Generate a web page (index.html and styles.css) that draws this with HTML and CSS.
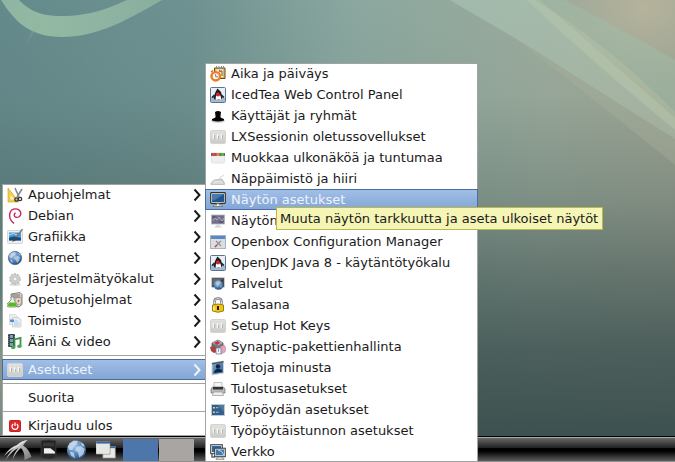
FILE: index.html
```html
<!DOCTYPE html>
<html lang="fi">
<head>
<meta charset="utf-8">
<meta name="viewport" content="width=device-width, initial-scale=1">
<title>Työpöytä</title>
<link rel="stylesheet" href="styles.css">
</head>
<body>
<svg class="defs" width="0" height="0" aria-hidden="true">
  <defs>
    <linearGradient id="plate" x1="0" y1="0" x2="0" y2="1"><stop offset="0" stop-color="#e2e2e0"/><stop offset="1" stop-color="#cbcbc8"/></linearGradient>
    <radialGradient id="sea" cx=".4" cy=".3" r=".8"><stop offset="0" stop-color="#a9c8e6"/><stop offset=".6" stop-color="#4a79ac"/><stop offset="1" stop-color="#1d3f6c"/></radialGradient>
    <linearGradient id="wing" x1="0" y1="0" x2="1" y2="1"><stop offset="0" stop-color="#f0f0f0"/><stop offset="1" stop-color="#777"/></linearGradient>
    <linearGradient id="pane" x1="0" y1="0" x2="1" y2="1"><stop offset="0" stop-color="#7fa9d8"/><stop offset="1" stop-color="#2c5f9c"/></linearGradient>
    <symbol id="i-sliders" viewBox="0 0 16 16">
      <rect x=".5" y="1.500" width="15" height="13" rx="1.500" fill="url(#plate)" stroke="#d4d4d1"/>
      <path d="M3.500 5v5M7.500 5v5M11.500 5v5" stroke="#f6f6f4" stroke-width="1.600"/>
      <path d="M4.500 6v4M8.500 7v3M12.500 6v4" stroke="#aaaaa7" stroke-width=".8"/>
    </symbol>
    <symbol id="i-duke" viewBox="0 0 16 16">
      <rect x=".5" y=".5" width="15" height="15" rx="1" fill="#e8eff5" stroke="#5c7690"/>
      <path d="M1 10q7-3 14 1v4H1z" fill="#9fbad2"/>
      <path d="M7.500 1.500L11 5l1.500 5.500-1.500 2.500H5l-1.500-2.500L5.500 5z" fill="#1c1c22"/>
      <path d="M6 8.500h4.500l1 4.500-3-.5-3 .5z" fill="#fff"/>
      <circle cx="7.900" cy="7.500" r="1.900" fill="#e0242e"/>
      <path d="M4.500 8l-2.500 2.500M11.500 8l2.500 2.500" stroke="#222" stroke-width="1.400"/>
    </symbol>
    <symbol id="i-globe" viewBox="0 0 16 16">
      <circle cx="8" cy="8" r="6.700" fill="url(#sea)" stroke="#375f8e" stroke-width=".6"/>
      <path d="M4 3l3-1 2 1-1 2-2 1-1 2-2 0-1-2zM8 7l3-1 2 1-1 4-2 2-1-3-2-1zM11 3l2 1 1 2-2-1zM3 9l2 1 1 3-2-1z" fill="#d3e3f3" opacity=".65"/>
    </symbol>
    <symbol id="i-arrow" viewBox="0 0 8 14">
      <path d="M1.500 1.500L6.500 7l-5 5.500" fill="none" stroke="currentColor" stroke-width="2"/>
    </symbol>
  </defs>
</svg>

<main class="desktop">
  <svg class="wallpaper" viewBox="0 0 675 436" preserveAspectRatio="none" aria-hidden="true">
    <defs>
      <linearGradient id="sky" x1="0" y1="0" x2="1" y2="0"><stop offset="0" stop-color="#658a8b"/><stop offset=".28" stop-color="#6e9291"/><stop offset=".52" stop-color="#8aa79f"/><stop offset=".8" stop-color="#9bab9c"/><stop offset="1" stop-color="#a0a796"/></linearGradient>
      <linearGradient id="dusk" x1="0" y1="0" x2="0" y2="1"><stop offset="0" stop-color="#3d5150" stop-opacity="0"/><stop offset=".22" stop-color="#3d5150" stop-opacity=".06"/><stop offset=".45" stop-color="#3d5150" stop-opacity=".3"/><stop offset=".62" stop-color="#3d5150" stop-opacity=".58"/><stop offset=".8" stop-color="#3d5150" stop-opacity=".84"/><stop offset="1" stop-color="#3d5150"/></linearGradient>
      <radialGradient id="warm"><stop offset="0" stop-color="#b9b49c" stop-opacity=".9"/><stop offset="1" stop-color="#a9ad98" stop-opacity="0"/></radialGradient>
      <linearGradient id="edge" x1="0" y1="0" x2="0" y2="1"><stop offset=".42" stop-color="#5e7e79"/><stop offset=".7" stop-color="#89958a"/><stop offset="1" stop-color="#758b80"/></linearGradient>
      <linearGradient id="loop" x1="0" y1="0" x2="1" y2="0"><stop offset="0" stop-color="#8fb4a2"/><stop offset=".25" stop-color="#93b9a3"/><stop offset="1" stop-color="#8aae9f"/></linearGradient>
      <linearGradient id="beam" x1="0" y1="0" x2="1" y2="1"><stop offset="0" stop-color="#a8c3b5" stop-opacity=".65"/><stop offset="1" stop-color="#b0bea9" stop-opacity=".55"/></linearGradient>
    </defs>
    <rect width="675" height="436" fill="url(#sky)"/>
    <rect width="675" height="436" fill="url(#dusk)"/>
    <rect y="184" width="3" height="252" fill="url(#edge)"/>
    <ellipse cx="645" cy="8" rx="110" ry="85" fill="url(#warm)"/>
    <path d="M1 0C15 22 30 37 62 37C96 37 124 22 162 0H127C103 11 84 16 64 16C45 16 33 14 19 0z" fill="url(#loop)"/>
    <path d="M38 21Q30 31 27 44Q33 33 43 22z" fill="#8ab09e" opacity=".25"/>
    <path d="M450 0H540L675 118V139Q600 92 530 47z" fill="url(#beam)"/>
    <path d="M530 47Q600 92 675 139V165Q610 112 515 38z" fill="#adb39c" opacity=".35"/>
    <path d="M527 0H535Q600 38 675 112V130Q590 60 527 0z" fill="#bac9ad" opacity=".45"/>
    <path d="M535 0H565Q620 28 675 60V112Q600 42 535 0z" fill="#a0bfa9" opacity=".45"/>
  </svg>

  <nav class="menu menu-main" aria-label="Päävalikko">
    <button class="item" type="button">
      <svg class="icon" viewBox="0 0 16 16"><path d="M1 1v14h11z" fill="#f2cf4b" stroke="#c9a326" stroke-width=".6"/><path d="M3.500 8v4.500h4z" fill="#fff6cf"/><path d="M8 1l4 9M15 2l-5 8" stroke="#85898a" stroke-width="1.600"/><circle cx="9.500" cy="12.500" r="1.700" fill="none" stroke="#333" stroke-width="1.300"/><circle cx="13" cy="12" r="1.700" fill="none" stroke="#333" stroke-width="1.300"/></svg>
      <span>Apuohjelmat</span><svg class="arrow"><use href="#i-arrow"/></svg>
    </button>
    <button class="item" type="button">
      <svg class="icon" viewBox="0 0 16 16"><path d="M7 15.500C4 13 2 9.500 2.800 5.500C3.500 2.500 6 .8 9 .9C12 1.100 14 3.500 13.800 6C13.500 8.500 11 9.800 9 9.300C7 8.800 6.500 6.500 8.500 4.800" fill="none" stroke="#c8265c" stroke-width="1.400"/></svg>
      <span>Debian</span><svg class="arrow"><use href="#i-arrow"/></svg>
    </button>
    <button class="item" type="button">
      <svg class="icon" viewBox="0 0 16 16"><rect x=".5" y="1.500" width="15" height="13" rx="1" fill="#eee" stroke="#d5d5d3"/><path d="M2 3.500h12v8H2z" fill="#4a9ad2"/><path d="M2 9q4-3 12 0v2.500H2z" fill="#174d80"/><path d="M2 6q5-3 8 0" stroke="#b5dff5" fill="none"/><path d="M15.500 0L9 8.500" stroke="#777" stroke-width="1.400"/><path d="M9.500 8L5 12.500q3 .5 5.500-3.500z" fill="#444"/></svg>
      <span>Grafiikka</span><svg class="arrow"><use href="#i-arrow"/></svg>
    </button>
    <button class="item" type="button">
      <svg class="icon"><use href="#i-globe"/></svg>
      <span>Internet</span><svg class="arrow"><use href="#i-arrow"/></svg>
    </button>
    <button class="item" type="button">
      <svg class="icon" viewBox="0 0 16 16"><ellipse cx="8" cy="13.500" rx="6" ry="1.500" fill="#ddd"/><circle cx="8" cy="8" r="5" fill="#d4d4d2" stroke="#b5b5b3" stroke-width="1.500" stroke-dasharray="2 1.140"/><circle cx="8" cy="8" r="4.300" fill="#cfcfcd"/><circle cx="8" cy="8" r="2" fill="#f5f5f5" stroke="#b5b5b3" stroke-width=".7"/></svg>
      <span>Järjestelmätyökalut</span><svg class="arrow"><use href="#i-arrow"/></svg>
    </button>
    <button class="item" type="button">
      <svg class="icon" viewBox="0 0 16 16"><path d="M4 2l9-1.500 2 2v10l-3 2.500-7-1z" fill="#d5d1c8" stroke="#66645e" stroke-width=".8"/><path d="M5 3h8M6 5h7" stroke="#77736a"/><rect x="9" y="6" width="5" height="6" fill="#faf8f4" stroke="#777" stroke-width=".5"/><rect x="10.500" y="7.500" width="2" height="3" fill="#d56c38"/><path d="M4 5h3v3l3 4q1 3-2 3H2q-3 0-2-3l4-4z" fill="#eef5e8" stroke="#68735f" stroke-width=".7"/><path d="M2 10.500h6.500l1 2q.5 2-1.500 2H2.500q-2 0-1.500-2z" fill="#55ba21"/></svg>
      <span>Opetusohjelmat</span><svg class="arrow"><use href="#i-arrow"/></svg>
    </button>
    <button class="item" type="button">
      <svg class="icon" viewBox="0 0 16 16"><path d="M2.500 1.500h6l2 2v8h-8z" fill="#ececeb" stroke="#d2d2d0" stroke-width=".7"/><path d="M5.500 4.500h6l2.500 2v7.500h-8.500z" fill="#e9edf1" stroke="#c4c8cc" stroke-width=".7"/><path d="M3 6.500h4v2.500H3z" fill="#4b91cf"/><path d="M7.500 8h3M7 10h5.500M7 12h5.500" stroke="#b3cde4"/></svg>
      <span>Toimisto</span><svg class="arrow"><use href="#i-arrow"/></svg>
    </button>
    <button class="item" type="button">
      <svg class="icon" viewBox="0 0 16 16"><rect x="1" y="0" width="7" height="13" fill="#3a4247"/><path d="M3 1h3v3H3zM3 5h3v3H3zM3 9h3v3H3z" fill="#79a0b8"/><path d="M1.800 0v13M7.300 0v13" stroke="#bbb" stroke-width=".6" stroke-dasharray="1 1"/><path d="M7.500 13V5.500l6-1.500v8" fill="none" stroke="#3b9347" stroke-width="1.800"/><ellipse cx="6.200" cy="13.500" rx="2.200" ry="1.800" fill="#4ba853"/><ellipse cx="12.400" cy="12.300" rx="2.200" ry="1.800" fill="#4ba853"/></svg>
      <span>Ääni &amp; video</span><svg class="arrow"><use href="#i-arrow"/></svg>
    </button>
    <hr class="rule">
    <button class="item selected" type="button" aria-expanded="true">
      <svg class="icon"><use href="#i-sliders"/></svg>
      <span>Asetukset</span><svg class="arrow"><use href="#i-arrow"/></svg>
    </button>
    <hr class="rule">
    <button class="item" type="button"><span class="icon"></span><span>Suorita</span></button>
    <hr class="rule">
    <button class="item" type="button">
      <svg class="icon" viewBox="0 0 16 16"><rect x="2.500" y="2.500" width="11" height="11" rx="1" fill="#dc2929" stroke="#c42020"/><path d="M6.200 6a3 3 0 1 0 3.600 0M8 4.500v3.500" fill="none" stroke="#fff" stroke-width="1.300"/></svg>
      <span>Kirjaudu ulos</span>
    </button>
  </nav>
</main>

<nav class="menu menu-sub" aria-label="Asetukset">
  <button class="item" type="button">
    <svg class="icon" viewBox="0 0 16 16"><path d="M4.500 2h10.500v10.500H4.500z" fill="#e9b75c" stroke="#6a4718"/><path d="M6.500 3.500h6.500v7.500H6.500z" fill="#f8f4e9"/><path d="M6.500 0v3M9 0v3M11.500 0v3M13.500 0v3" stroke="#888" stroke-width="1"/><path d="M9 5h3v5" stroke="#555" fill="none"/><circle cx="5.700" cy="10.300" r="4.200" fill="#fff" stroke="#ef7c1d" stroke-width="2.400"/><path d="M5.700 8v2.800H8" fill="none" stroke="#777"/><path d="M1 6l2-1.500M9 4.500l1.500 1.500" stroke="#d9650d" stroke-width="1.500"/></svg>
    <span>Aika ja päiväys</span>
  </button>
  <button class="item" type="button"><svg class="icon"><use href="#i-duke"/></svg><span>IcedTea Web Control Panel</span></button>
  <button class="item" type="button">
    <svg class="icon" viewBox="0 0 16 16"><ellipse cx="8" cy="13" rx="7" ry="1.800" fill="#ccc"/><path d="M5 4q3-2 6 0l-.5 4q-.5 1.500 1 2l2.500 1v1.500q-6 2-12 0V11l2.500-1q1.500-.5 1-2z" fill="#050505"/></svg>
    <span>Käyttäjät ja ryhmät</span>
  </button>
  <button class="item" type="button"><svg class="icon"><use href="#i-sliders"/></svg><span>LXSessionin oletussovellukset</span></button>
  <button class="item" type="button">
    <svg class="icon" viewBox="0 0 16 16"><rect x="1.500" y="3" width="13" height="10" rx="1" fill="#eee" stroke="#ddd" stroke-width=".8"/><path d="M1 3h14v3H1z" fill="#6b6670"/><path d="M2 3h3v3H2z" fill="#f23a48"/><path d="M6.500 3h3v3h-3z" fill="#e58a3a"/><path d="M11 3h3v3h-3z" fill="#4fb548"/></svg>
    <span>Muokkaa ulkonäköä ja tuntumaa</span>
  </button>
  <button class="item" type="button">
    <svg class="icon" viewBox="0 0 16 16"><path d="M4 9l8-1 2.500 4v1.500H1V12z" fill="#cfcfcd" stroke="#b5b5b3" stroke-width=".7"/><path d="M4 10.500h8M3 12h10" stroke="#efefef" stroke-width=".7"/><path d="M10 8q-1-2 1-2.500 2-.5 3-1.500" fill="none" stroke="#ccc" stroke-width=".8"/></svg>
    <span>Näppäimistö ja hiiri</span>
  </button>
  <button class="item selected" type="button" aria-describedby="display-tip">
    <svg class="icon" viewBox="0 0 16 16"><rect x=".7" y=".7" width="14.600" height="10.600" rx=".8" fill="#eeeee7" stroke="#30322e" stroke-width="1.200"/><rect x="2" y="2" width="12" height="8" fill="#24548b"/><path d="M2 2h12L4 8.500H2z" fill="#467baf"/><path d="M6.500 11.500h3V13h3v1.500h-9V13h3z" fill="#e4e4de" stroke="#565850" stroke-width=".6"/></svg>
    <span>Näytön asetukset</span>
  </button>
  <button class="item" type="button">
    <svg class="icon" viewBox="0 0 16 16"><rect x="1.500" y="2" width="13" height="9" fill="#736e8c" stroke="#b5b5b5" stroke-width=".8"/><path d="M3 8l2-3 2 2 2-3 3 4 2-3" fill="none" stroke="#aca8bd"/><path d="M2.500 4h3M9 9h4" stroke="#57516f" stroke-width="1.500"/><path d="M6.500 11.500h3V13h2v1.500H5V13h1.500z" fill="#d5d5d5"/></svg>
    <span>Näytön</span>
  </button>
  <button class="item" type="button">
    <svg class="icon" viewBox="0 0 16 16"><rect x=".5" y="1.500" width="15" height="13" fill="#dedede" stroke="#a7b3c4"/><path d="M1 2h14v3H1z" fill="#568ac4"/><path d="M5 13l6-6M6 7l5 5" stroke="#8c9098" stroke-width="1.200"/><path d="M5 13l2-2" stroke="#d04b41" stroke-width="1.600"/></svg>
    <span>Openbox Configuration Manager</span>
  </button>
  <button class="item" type="button"><svg class="icon"><use href="#i-duke"/></svg><span>OpenJDK Java 8 - käytäntötyökalu</span></button>
  <button class="item" type="button">
    <svg class="icon" viewBox="0 0 16 16"><rect x="2" y="2" width="12" height="9" fill="#30343b" stroke="#777" stroke-width=".8"/><path d="M2.500 10V2.500h11z" fill="#646970"/><circle cx="8.500" cy="9" r="4.800" fill="url(#sea)"/><path d="M6 7l3-2 2 2-2 2-2 2zM10 10l2-1-1 3z" fill="#b5d2ed" opacity=".7"/></svg>
    <span>Palvelut</span>
  </button>
  <button class="item" type="button">
    <svg class="icon" viewBox="0 0 16 16"><path d="M4.500 8V4.500q0-3 3.500-3t3.500 3V8" fill="none" stroke="#777" stroke-width="2.400"/><path d="M4.500 8V4.500q0-3 3.500-3t3.500 3V8" fill="none" stroke="#ddd"/><path d="M2.500 8q5.500-2 11 0v6q-5.500 2.500-11 0z" fill="#edc51e" stroke="#a57e07"/><path d="M4 9.500v4" stroke="#fff08a" stroke-width="1.500"/><path d="M8 9v4" stroke="#27210e" stroke-width="2"/></svg>
    <span>Salasana</span>
  </button>
  <button class="item" type="button"><svg class="icon"><use href="#i-sliders"/></svg><span>Setup Hot Keys</span></button>
  <button class="item" type="button">
    <svg class="icon" viewBox="0 0 16 16"><path d="M2 4l6-3 5 3v5l-5 3-6-3z" fill="#70777d" stroke="#3c4144" stroke-width=".7"/><path d="M2 4l6 2.500L13 4 8 1z" fill="#a8b1b8"/><path d="M4 4l4-2 2 2-3 2z" fill="#d52b2b"/><path d="M0 8l4-1 3 2v4l-3 1-3-2z" fill="#a94145"/><path d="M10 8l4-2 2 3-1 4-4 2-2-3z" fill="#e3a5b6" stroke="#b97188" stroke-width=".5"/><path d="M6 9h5v6H6z" fill="#f4f4f8" stroke="#69728d" stroke-width=".7"/><path d="M8.500 10v3" fill="none" stroke="#8aa0c4"/></svg>
    <span>Synaptic-pakettienhallinta</span>
  </button>
  <button class="item" type="button">
    <svg class="icon" viewBox="0 0 16 16"><path d="M2 3l11.500-2v12L2 15z" fill="url(#pane)" stroke="#d2d2cc"/><path d="M2 3l11.500-2v1.500L2 4.500z" fill="#525a63"/><circle cx="8" cy="6.500" r="2.200" fill="#10253e"/><path d="M4 13q0-3 3-4h2q3 0 3 2.700z" fill="#10253e"/></svg>
    <span>Tietoja minusta</span>
  </button>
  <button class="item" type="button">
    <svg class="icon" viewBox="0 0 16 16"><path d="M4 1.500h8v5H4z" fill="#f5f5f5" stroke="#aaa" stroke-width=".7"/><path d="M2.500 6h11l1.500 2v4H1V8z" fill="#b9b9b7" stroke="#6f6f6d" stroke-width=".7"/><path d="M3 6h10v2.500H3z" fill="#333"/><path d="M3.500 11h9l1 3.500h-11z" fill="#eee" stroke="#999" stroke-width=".7"/></svg>
    <span>Tulostusasetukset</span>
  </button>
  <button class="item" type="button">
    <svg class="icon" viewBox="0 0 16 16"><rect x="1.500" y="2.500" width="13" height="11" fill="#31608f" stroke="#bdc8d0"/><path d="M8 3h6v7z" fill="#54799d"/><path d="M3 5h2v1.500H3zM3 9.500h2V11H3z" fill="#e8c797"/><path d="M6 5.700h2.500M6 10.200h2.500" stroke="#a9bfd6"/></svg>
    <span>Työpöydän asetukset</span>
  </button>
  <button class="item" type="button"><svg class="icon"><use href="#i-sliders"/></svg><span>Työpöytäistunnon asetukset</span></button>
  <button class="item" type="button">
    <svg class="icon" viewBox="0 0 16 16"><rect x=".7" y=".7" width="11.600" height="9" fill="#e6e8e4" stroke="#343b3d"/><path d="M2 2h9v6H2z" fill="#34669d"/><path d="M2 10v3h3" fill="none" stroke="#60666a" stroke-width="1.500"/><rect x="4.700" y="4.200" width="10.600" height="8.500" fill="#e6e8e4" stroke="#343b3d"/><path d="M6 5.500h8v5.800H6z" fill="#4278b0"/><path d="M8 6q4 0 6 5" stroke="#c8ddf0" fill="none"/><path d="M8 13h4v1h2v1.500H6V14h2z" fill="#d8dad4" stroke="#656864" stroke-width=".5"/></svg>
    <span>Verkko</span>
  </button>
</nav>
<div class="tooltip" role="tooltip" id="display-tip">Muuta näytön tarkkuutta ja aseta ulkoiset näytöt</div>

<footer class="panel">
  <button class="launcher launcher-menu" type="button" aria-label="Valikko">
    <svg viewBox="0 0 28 22"><path d="M23 1Q17 2 13.500 6Q7 10 1.500 21Q9 11 14.500 9Q10 13 8.500 21Q12 13 17 9Q21 13 20.500 21L27.500 18Q25 10 19 6.500z" fill="url(#wing)"/><path d="M24 1L14 7.500Q8 9 0 17Q6 8 13 6Q17 2 24 1z" fill="#ddd"/></svg>
  </button>
  <button class="launcher" type="button" aria-label="Tiedostonhallinta">
    <svg viewBox="0 0 24 24"><path d="M4 2q8-2 16 0v18q-8 3-16 0z" fill="#222" stroke="#3c3c3c"/><path d="M6 4h12v4H6z" fill="#383838"/><path d="M7 10h7l5 4v2H7z" fill="#f0f0ed"/><path d="M5 16h14v4q-7 2-14 0z" fill="#2b2b2b"/></svg>
  </button>
  <button class="launcher" type="button" aria-label="Selain"><svg viewBox="0 0 16 16"><circle cx="8" cy="8" r="7" fill="url(#sea)"/><path d="M3 3l3-2 3 .5-1 2.500-2 1-1 3-2 0-1.500-2zM8 6l3-1 3 2-1 4-3 2.500-1-4-2-1zM11 2.500l2 1 1 2-2-.5zM3 9l3 1 1 4-3-2z" fill="#cfe2f5" opacity=".75"/></svg></button>
  <button class="launcher" type="button" aria-label="Näytä työpöytä">
    <svg viewBox="0 0 24 24"><rect x="10.500" y="8.500" width="13" height="12" fill="#e8e8e5" stroke="#ccc"/><path d="M10 8h14v2H10z" fill="#3465a4"/><rect x="3.500" y="3.500" width="14" height="12.500" fill="#e6e6e3" stroke="#fff"/><path d="M3 16.500h15V5" fill="none" stroke="#777" stroke-width=".7"/><path d="M3 3h15v2H3z" fill="#3465a4"/></svg>
  </button>
  <div class="pager">
    <button class="space current" type="button" aria-label="Työtila 1"></button>
    <button class="space" type="button" aria-label="Työtila 2"></button>
  </div>
</footer>
</body>
</html>
```
FILE: styles.css
```css
* { box-sizing: border-box; }

body {
  margin: 0;
  min-height: 100vh;
  display: flex;
  flex-direction: column;
  position: relative;
  overflow: hidden;
  font: 13px/21px "DejaVu Sans", sans-serif;
  color: #1a1a1a;
}

.defs { position: absolute; }

button {
  margin: 0;
  padding: 0;
  border: 0;
  background: none;
  font: inherit;
  color: inherit;
}

.desktop {
  flex: 1;
  position: relative;
}

.wallpaper {
  position: absolute;
  width: 100%;
  height: 100%;
}

.menu {
  position: absolute;
  display: flex;
  flex-direction: column;
  background: #fff;
  box-shadow: inset 0 0 0 1px #a2a29e;
}

.menu-main {
  left: 2px;
  bottom: 0;
  width: 204px;
}

.menu-sub {
  left: 205px;
  bottom: 0;
  width: 273px;
  z-index: 1;
}

.item {
  display: flex;
  align-items: center;
  gap: 5px;
  height: 21px;
  padding: 0 5px;
  text-align: left;
  white-space: nowrap;
}

.icon {
  flex: none;
  width: 16px;
  height: 16px;
}

.arrow {
  width: 8px;
  height: 14px;
  margin-left: auto;
}

.selected {
  color: #eef3fa;
  background: linear-gradient(#a2c0e8, #82a5d5);
  box-shadow: inset 0 0 0 1px #4a6c9f;
}

.rule {
  width: 100%;
  height: 7px;
  margin: 0;
  border: 0;
  background: linear-gradient(#a2a29e, #a2a29e) center / 100% 1px no-repeat;
}

.tooltip {
  position: absolute;
  z-index: 2;
  left: 276px;
  bottom: 232px;
  padding: 0 4px 0 3px;
  border: 1px solid #b8b84c;
  background: #f5f5b5;
  white-space: nowrap;
}

.panel {
  display: flex;
  align-items: center;
  height: 26px;
  padding: 1px 4px 0;
  gap: 5px;
  border-top: 1px solid #000;
  background: linear-gradient(#aaa 0 1px, #686868 1px, #202020 11px, #000 11px, #000 14px, #5c5c5c 24px, #909090 24px);
}

.launcher {
  width: 23px;
  height: 22px;
}

.launcher-menu { width: 28px; }

.launcher svg {
  display: block;
  width: 100%;
  height: 100%;
}

.pager {
  display: flex;
  gap: 1px;
  padding-left: 2px;
}

.space {
  width: 35px;
  height: 22px;
  background: #a9a5a2;
}

.current { background: #4d76ab; }
```
